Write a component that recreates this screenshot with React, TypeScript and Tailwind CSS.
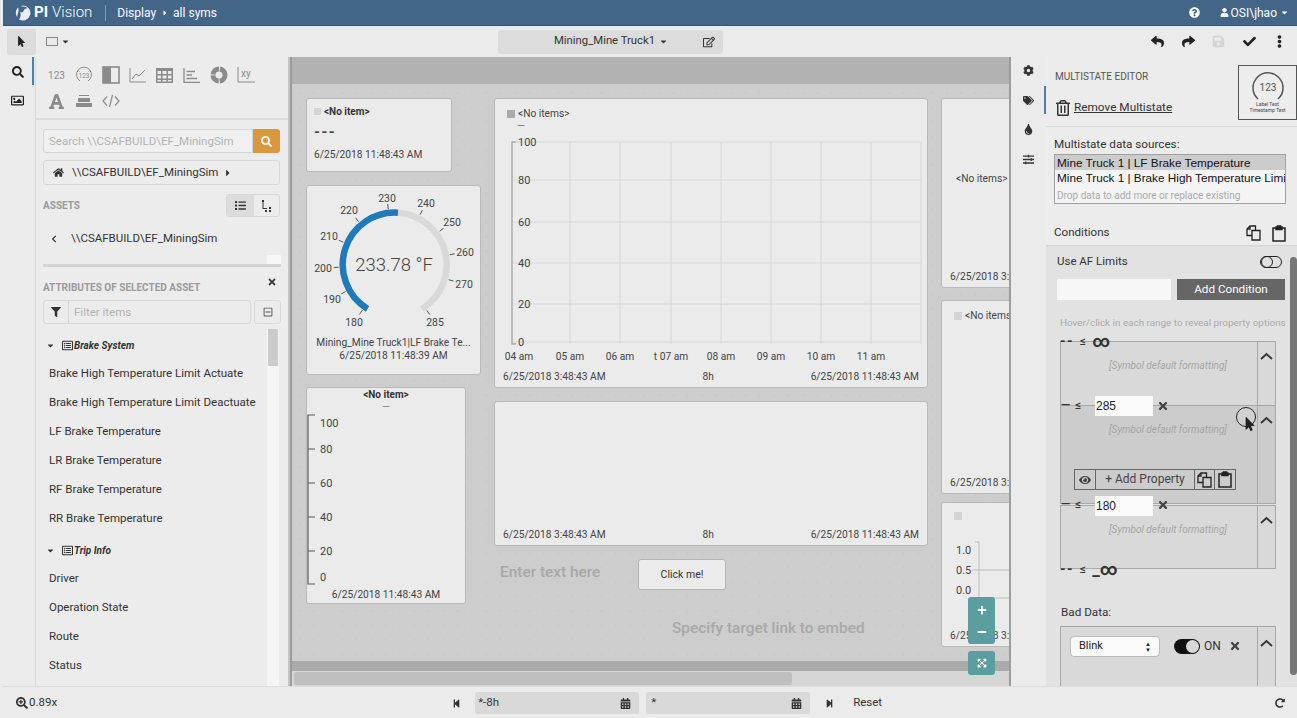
import React from "react";
import {
  FaCalendarAlt, FaCaretDown, FaCaretRight, FaCheck, FaChevronLeft, FaCog, FaEllipsisV, FaExpandArrowsAlt,
  FaEye, FaFilter, FaFont, FaHome, FaList, FaMinus, FaMousePointer, FaPlus, FaQuestionCircle, FaRedoAlt,
  FaRegEdit, FaRegImage, FaRegListAlt, FaRegMinusSquare, FaRegTrashAlt, FaReply, FaSave, FaSearch,
  FaSearchPlus, FaShare, FaSlidersH, FaStepBackward, FaStepForward, FaTags, FaTimes, FaTint, FaUser,
} from "react-icons/fa";

const assetGroups = [
  {
    name: "Brake System",
    items: [
      "Brake High Temperature Limit Actuate",
      "Brake High Temperature Limit Deactuate",
      "LF Brake Temperature",
      "LR Brake Temperature",
      "RF Brake Temperature",
      "RR Brake Temperature",
    ],
  },
  { name: "Trip Info", items: ["Driver", "Operation State", "Route", "Status"] },
];

const gaugeLabels = [
  ["180", 47, 136], ["190", 25, 113], ["200", 16, 82], ["210", 22, 50], ["220", 42, 24], ["230", 80, 12],
  ["240", 119, 17], ["250", 145, 36], ["260", 158, 66], ["270", 157, 98], ["285", 128, 136],
] as const;

const CopyIcon = () => (
  <svg width="15" height="16" viewBox="0 0 15 16" fill="none" stroke="#222" strokeWidth="1.300">
    <path d="M6 10.500H1V4L4 1H9.500V5" />
    <path d="M4 1V4H1" />
    <path d="M6 5.500H14V15H6Z" />
  </svg>
);

const ClipIcon = () => (
  <svg width="14" height="17" viewBox="0 0 14 17" fill="none" stroke="#222" strokeWidth="1.500">
    <path d="M4 3H1V16H13V3H10" />
    <path d="M4 4.500V2H5.500V1H8.500V2H10V4.500Z" fill="#222" />
  </svg>
);

const PaletteIcons = () => (
  <div className="flex flex-wrap w-[240px] pl-[7px] pt-[5px] text-[#8b8b8b]">
    <div className="w-[27px] h-[26px] flex items-center justify-center text-[10px]">123</div>
    <div className="w-[27px] h-[26px] flex items-center justify-center">
      <svg width="18" height="18" viewBox="0 0 18 18" fill="none" stroke="currentColor">
        <path d="M5 15A7.5 7.5 0 1 1 13 15" />
        <text x="9" y="11.5" fontSize="6.5" textAnchor="middle" fill="currentColor" stroke="none">123</text>
      </svg>
    </div>
    <div className="w-[27px] h-[26px] flex items-center justify-center">
      <svg width="18" height="18" viewBox="0 0 18 18">
        <rect x="1" y="1" width="16" height="16" fill="none" stroke="currentColor" strokeWidth="1.6" />
        <rect x="1" y="1" width="8" height="16" fill="currentColor" />
      </svg>
    </div>
    <div className="w-[27px] h-[26px] flex items-center justify-center">
      <svg width="18" height="16" viewBox="0 0 18 16" fill="none" stroke="currentColor">
        <path d="M1 1V15H17" />
        <path d="M3 12L7 7L10 9L16 3" />
      </svg>
    </div>
    <div className="w-[27px] h-[26px] flex items-center justify-center">
      <svg width="17" height="15" viewBox="0 0 17 15">
        <path fillRule="evenodd" fill="currentColor" d="M0 0H17V15H0ZM1.5 3V6H5V3ZM6.5 3V6H10.500V3ZM12 3V6H15.500V3ZM1.500 7.500V10.500H5V7.500ZM6.500 7.500V10.500H10.500V7.500ZM12 7.500V10.500H15.500V7.500ZM1.500 12V13.500H5V12ZM6.500 12V13.500H10.500V12ZM12 12V13.500H15.500V12Z" />
      </svg>
    </div>
    <div className="w-[27px] h-[26px] flex items-center justify-center">
      <svg width="17" height="15" viewBox="0 0 17 15" fill="none" stroke="currentColor" strokeWidth="1.300">
        <path d="M1 0V14.500H17M3.500 3.500H12M3.500 7H9M3.500 10.500H14" />
      </svg>
    </div>
    <div className="w-[27px] h-[26px] flex items-center justify-center">
      <svg width="18" height="18" viewBox="0 0 18 18" fill="none" stroke="currentColor" strokeWidth="5">
        <circle cx="9" cy="9" r="6" strokeDasharray="8.500 1" />
      </svg>
    </div>
    <div className="w-[27px] h-[26px] flex items-center justify-center">
      <svg width="18" height="16" viewBox="0 0 18 16" fill="none" stroke="currentColor">
        <path d="M1 0V15H18" />
        <text x="4" y="10" fontSize="10" fill="currentColor" stroke="none">xy</text>
      </svg>
    </div>
    <div className="w-[27px] h-[26px] flex items-center justify-center">
      <FaFont size={17} />
    </div>
    <div className="w-[27px] h-[26px] flex items-center justify-center">
      <svg width="16" height="13" viewBox="0 0 16 13" fill="currentColor">
        <path d="M3 0H13V1H3ZM2 3H14V7H2ZM0 8H16V12H0Z" />
      </svg>
    </div>
    <div className="w-[27px] h-[26px] flex items-center justify-center">
      <svg width="18" height="14" viewBox="0 0 18 14" fill="none" stroke="currentColor" strokeWidth="1.200">
        <path d="M5 2.500L1 7L5 11.500M13 2.500L17 7L13 11.500M10.500 1L7.500 13" />
      </svg>
    </div>
  </div>
);

const LeftPanel = () => (
  <aside className="w-[252px] bg-[#ececec] flex flex-col overflow-hidden">
    <div className="h-[63px] border-b-2 border-[#dcdcdc] shrink-0">
      <PaletteIcons />
    </div>
    <div className="pl-[7px] pr-[8px] pt-[9px] flex flex-col">
      <div className="flex h-[24px]">
        <div className="flex-1 bg-[#f0f0f0] border border-[#d4d4d4] rounded-l-[3px] pl-[5px] text-[11.5px] leading-[22px] text-[#b3b3b3]">
          Search \\CSAFBUILD\EF_MiningSim
        </div>
        <div className="w-[27px] bg-[#d9983f] rounded-r-[3px] flex items-center justify-center text-white text-[11px]">
          <FaSearch />
        </div>
      </div>
      <div className="mt-[7px] h-[25px] border border-[#d8d8d8] rounded-[3px] flex items-center pl-[9px] text-[11.5px] text-[#333]">
        <FaHome size={11} />
        <span className="ml-[8px]">\\CSAFBUILD\EF_MiningSim</span>
        <FaCaretRight size={10} className="ml-[5px]" />
      </div>
      <div className="mt-[9px] h-[23px] flex items-center justify-between">
        <span className="text-[10px] font-bold text-[#9a9a9a]">ASSETS</span>
        <div className="flex h-[23px] border border-[#d8d8d8] rounded-[3px] overflow-hidden text-[#333]">
          <div className="w-[27px] bg-[#dcdcdc] flex items-center justify-center text-[11px]"><FaList /></div>
          <div className="w-[25px] flex items-center justify-center">
            <svg width="11" height="12" viewBox="0 0 11 12" fill="currentColor">
              <path d="M1 0H3V2H2.500V8H6V9H1.500V2H1ZM8 7H10V9H8ZM4 10H6V12H4ZM8 10H10V12H8Z" />
            </svg>
          </div>
        </div>
      </div>
      <div className="mt-[11px] h-[22px] flex items-center pl-[7px] text-[11.5px] text-[#333]">
        <FaChevronLeft size={8} />
        <span className="ml-[13px]">\\CSAFBUILD\EF_MiningSim</span>
      </div>
    </div>
    <div className="relative mt-[5px] mx-[7px] h-[12px] overflow-hidden border-b-[3px] border-[#d4d4d4]">
      <div className="absolute right-0 top-0 w-[14px] h-[9px] bg-[#f7f7f7]" />
    </div>
    <div className="relative pl-[7px] pr-[8px] pt-[13px] h-[40px] text-[10px] font-bold text-[#9a9a9a]">
      ATTRIBUTES OF SELECTED ASSET
      <FaTimes size={10} className="absolute right-[11px] top-[10px] text-[#333]" />
    </div>
    <div className="flex h-[24px] mx-[7px] shrink-0 -mt-[7px]">
      <div className="w-[26px] border border-[#d8d8d8] rounded-l-[3px] flex items-center justify-center text-[#333] text-[10px]"><FaFilter /></div>
      <div className="flex-1 border border-l-0 border-[#d8d8d8] rounded-r-[3px] pl-[5px] text-[11.5px] leading-[22px] text-[#b3b3b3]">Filter items</div>
      <div className="w-[27px] ml-[3px] border border-[#d8d8d8] rounded-[3px] flex items-center justify-center text-[#555] text-[10px]"><FaRegMinusSquare /></div>
    </div>
    <div className="relative flex-1 overflow-hidden mt-[5px]">
      <div className="absolute right-[9px] top-0 bottom-0 w-[12px] bg-[#f5f5f5]">
        <div className="h-[37px] w-[10px] bg-[#cbcbcb] mx-auto" />
      </div>
      <div className="pl-[10px] pt-[2px] flex flex-col gap-[3px] text-[11.5px] text-[#333]">
        {assetGroups.map((group) => (
          <div key={group.name}>
            <div className="h-[28px] flex items-center font-bold italic text-[10px] text-[#333]">
              <FaCaretDown size={9} />
              <FaRegListAlt size={11} className="ml-[7px]" />
              <span className="ml-[1px]">{group.name}</span>
            </div>
            {group.items.map((item) => (
              <div key={item} className="h-[29px] leading-[29px] pl-[3px]">{item}</div>
            ))}
          </div>
        ))}
      </div>
    </div>
  </aside>
);

const TrendPlot = () => (
  <svg width="420" height="250" className="absolute left-[10px] top-[36px]" fontFamily="Roboto, sans-serif" fontSize="11" fill="#444">
    {[65, 115, 166, 216, 266, 316, 366, 416].map((x) => (
      <line key={x} x1={x} x2={x} y1="7" y2="209" stroke="#d6d6d6" />
    ))}
    {[7, 45, 87, 128, 169, 207].map((y) => (
      <line key={y} x1="7" x2="416" y1={y} y2={y} stroke="#d8d8d8" />
    ))}
    <path d="M11 7H7V209H11" fill="none" stroke="#adadad" strokeWidth="1.500" />
    <text x="13" y="11">100</text>
    <text x="13" y="49">80</text>
    <text x="13" y="91">60</text>
    <text x="13" y="132">40</text>
    <text x="13" y="173">20</text>
    <text x="13" y="211">0</text>
    {["04 am", "05 am", "06 am", "t 07 am", "08 am", "09 am", "10 am", "11 am"].map((t, i) => (
      <text key={t} x={[14, 65, 115, 166, 216, 266, 316, 366][i]} y="225" textAnchor="middle" fontSize="10.200">{t}</text>
    ))}
  </svg>
);

const Gauge = () => (
  <svg width="175" height="150" className="absolute left-0 top-0" fontFamily="Roboto, sans-serif" fontSize="10.500" fill="#444">
    <path d="M60.500 122.900A52 52 0 0 1 91 26.700" fill="none" stroke="#1f7abc" strokeWidth="6.500" />
    <path d="M91 26.700A52 52 0 0 1 114.900 122.900" fill="none" stroke="#d9d9d9" strokeWidth="6.500" />
    {gaugeLabels.map(([label, x, y]) => {
      const a = Math.atan2(y - 78.6, x - 87.7);
      return (
        <g key={label}>
          <line x1={87.7 + 56 * Math.cos(a)} y1={78.6 + 56 * Math.sin(a)} x2={87.7 + 61 * Math.cos(a)} y2={78.6 + 61 * Math.sin(a)} stroke="#555" />
          <text x={x} y={y + 4} textAnchor="middle">{label}</text>
        </g>
      );
    })}
    <text x="87" y="85" textAnchor="middle" fontSize="18.500" fontWeight="300" fill="#444">233.78 °F</text>
  </svg>
);

const Canvas = () => (
  <main className="w-[719px] relative overflow-hidden bg-[#cdcdcd] bg-[radial-gradient(#bcbcbc_0.7px,transparent_0.8px)] bg-[size:14.4px_14.4px] border-r-2 border-[#9c9c9c]">
    <div className="h-[27px] bg-[#b2b2b2]" />
    <div className="absolute left-[14px] top-[41px] w-[146px] h-[74px] bg-[#ebebeb] border border-[#b9b9b9] rounded-[3px] text-[#444] text-[10.2px]">
      <div className="flex items-center pl-[7px] pt-[5px]">
        <span className="w-[7px] h-[7px] bg-[#d4d4d4]" />
        <span className="ml-[3px] text-[10px] font-bold text-[#333]">&lt;No item&gt;</span>
      </div>
      <div className="pl-[7px] mt-[5px] text-[15px] leading-[16px] font-bold tracking-[1.5px]">---</div>
      <div className="pl-[7px] mt-[7px]">6/25/2018 11:48:43 AM</div>
    </div>
    <div className="absolute left-[14px] top-[128px] w-[175px] h-[190px] bg-[#ebebeb] border border-[#b9b9b9] rounded-[3px] text-[#444] text-[10.2px] text-center">
      <Gauge />
      <div className="absolute left-0 right-0 top-[150px] leading-[13px]">
        <div>Mining_Mine Truck1|LF Brake Te...</div>
        <div>6/25/2018 11:48:39 AM</div>
      </div>
    </div>
    <div className="absolute left-[14px] top-[330px] w-[160px] h-[217px] bg-[#ebebeb] border border-[#b9b9b9] rounded-[3px] text-[#444] text-[10.2px] text-center">
      <div className="text-[10px] font-bold text-[#333] pt-[1px] leading-[12px]">&lt;No item&gt;</div>
      <div className="leading-[12px] text-[#888]">—</div>
      <svg width="60" height="180" className="absolute left-0 top-[26px]" fontFamily="Roboto, sans-serif" fontSize="11" fill="#444">
        <path d="M8 1H1V170H8M1 35H8M1 69H8M1 103H8M1 137H8" fill="none" stroke="#555" strokeWidth="1.200" />
        <text x="13" y="13">100</text>
        <text x="13" y="39">80</text>
        <text x="13" y="73">60</text>
        <text x="13" y="107">40</text>
        <text x="13" y="141">20</text>
        <text x="13" y="167">0</text>
      </svg>
      <div className="absolute left-0 right-0 top-[199px]">6/25/2018 11:48:43 AM</div>
    </div>
    <div className="absolute left-[202px] top-[41px] w-[434px] h-[290px] bg-[#ebebeb] border border-[#b9b9b9] rounded-[3px] text-[#444] text-[10.2px]">
      <div className="flex items-center pl-[12px] pt-[7px]">
        <span className="w-[8px] h-[8px] bg-[#aaaaaa]" />
        <span className="ml-[3px]">&lt;No items&gt;</span>
      </div>
      <div className="pl-[22px] leading-[10px] text-[#777]">—</div>
      <TrendPlot />
      <div className="absolute left-[8px] right-[8px] bottom-[3px] flex justify-between">
        <span>6/25/2018 3:48:43 AM</span><span>8h</span><span>6/25/2018 11:48:43 AM</span>
      </div>
    </div>
    <div className="absolute left-[202px] top-[344px] w-[434px] h-[145px] bg-[#ebebeb] border border-[#b9b9b9] rounded-[3px] text-[#444] text-[10.2px]">
      <div className="absolute left-[8px] right-[8px] bottom-[3px] flex justify-between">
        <span>6/25/2018 3:48:43 AM</span><span>8h</span><span>6/25/2018 11:48:43 AM</span>
      </div>
    </div>
    <div className="absolute left-[208px] top-[506px] text-[15.4px] leading-[18px] font-medium text-[#a8a8a8]">Enter text here</div>
    <div className="absolute left-[346px] top-[502px] w-[88px] h-[31px] bg-[#ebebeb] border border-[#b5b5b5] rounded-[3px] flex items-center justify-center text-[10.5px] text-[#333]">Click me!</div>
    <div className="absolute left-[380px] top-[562px] text-[15.4px] leading-[18px] font-medium text-[#a8a8a8]">Specify target link to embed</div>
    <div className="absolute left-[649px] top-[41px] w-[90px] h-[190px] bg-[#ebebeb] border border-[#b9b9b9] rounded-[3px] text-[#444] text-[10.2px]">
      <div className="absolute left-[14px] top-[72px] whitespace-nowrap">&lt;No items&gt;</div>
      <div className="absolute left-[8px] bottom-[3px] whitespace-nowrap">6/25/2018 3:</div>
    </div>
    <div className="absolute left-[649px] top-[243px] w-[90px] h-[194px] bg-[#ebebeb] border border-[#b9b9b9] rounded-[3px] text-[#444] text-[10.2px]">
      <div className="absolute left-[12px] top-[7px] flex items-center whitespace-nowrap">
        <span className="w-[8px] h-[8px] bg-[#d4d4d4]" /><span className="ml-[3px]">&lt;No items</span>
      </div>
      <div className="absolute left-[8px] bottom-[3px] whitespace-nowrap">6/25/2018 3:</div>
    </div>
    <div className="absolute left-[649px] top-[445px] w-[90px] h-[145px] bg-[#ebebeb] border border-[#b9b9b9] rounded-[3px] text-[#444] text-[10.2px]">
      <span className="absolute left-[12px] top-[9px] w-[8px] h-[8px] bg-[#d4d4d4]" />
      <svg width="70" height="70" className="absolute left-0 top-[38px]" fontFamily="Roboto, sans-serif" fontSize="11" fill="#444">
        <path d="M33 1H37V57H70M30 29H70" fill="none" stroke="#bdbdbd" />
        <text x="14" y="13">1.0</text>
        <text x="14" y="33">0.5</text>
        <text x="14" y="53">0.0</text>
      </svg>
      <div className="absolute left-[8px] bottom-[3px] whitespace-nowrap">6/25/2018 3:</div>
    </div>
    <div className="absolute left-0 right-0 top-[604px] h-[10px] bg-[#aaaaaa]" />
    <div className="absolute left-0 right-0 top-[614px] bottom-0 bg-[#d6d6d6] pl-[2px] pt-[1px]">
      <div className="h-[13px] w-[498px] bg-[#bfbfbf] rounded-[2px]" />
    </div>
    <div className="absolute left-[676px] top-[540px] w-[27px] h-[47px] bg-[#5a9ea0] rounded-[3px] flex flex-col items-center justify-center gap-[12px] text-white text-[10px]">
      <FaPlus /><FaMinus />
    </div>
    <div className="absolute left-[676px] top-[594px] w-[27px] h-[24px] bg-[#5a9ea0] rounded-[3px] flex items-center justify-center text-white text-[10px]">
      <FaExpandArrowsAlt />
    </div>
  </main>
);

const Chevron = () => (
  <svg width="13" height="8" viewBox="0 0 13 8" fill="none" stroke="#333" strokeWidth="1.800">
    <path d="M1 7L6.500 2L12 7" />
  </svg>
);

const ThresholdInput = ({ value }: { value: string }) => (
  <div className="absolute left-[34px] -top-[10px] w-[58px] h-[20px] bg-[#fafafa] text-[12px] leading-[20px] pl-[1px] font-['Liberation_Sans',sans-serif] text-[#222]">{value}</div>
);

const RangeRow = ({ height, shade, children }: { height: string; shade: string; children?: React.ReactNode }) => (
  <div className={`relative flex border border-[#a8a8a8] ${height} ${shade}`}>
    <div className="flex-1 pl-[18px] pt-[16px] text-center text-[10px] italic text-[#a5a5a5]">[Symbol default formatting]</div>
    <div className="w-[18px] border-l border-[#a8a8a8] flex justify-center pt-[10px]"><Chevron /></div>
    {children}
  </div>
);

const RangeEditor = () => (
  <div className="relative mt-[12px] ml-[14px] w-[216px] text-[#444]">
    <RangeRow height="h-[65px]" shade="bg-[#d9d9d9]">
      <div className="absolute -left-px -top-[9px] flex items-center gap-[6px] text-[12px] leading-[16px] text-[#333]">
        <span className="font-bold tracking-[1.5px] text-[14px]">--</span><span>≤</span><span className="text-[17px] leading-[14px] font-bold">∞</span>
      </div>
    </RangeRow>
    <RangeRow height="h-[99px] -mt-px" shade="bg-[#cccccc]">
      <div className="absolute left-0 -top-[9px] flex items-center gap-[5px] text-[12px] leading-[16px] text-[#333]"><span className="font-bold">—</span><span>≤</span></div>
      <ThresholdInput value="285" />
      <FaTimes size={12} className="absolute left-[96px] -top-[6px] text-[#444]" />
      <div className="absolute left-[13px] top-[63px] w-[162px] h-[21px] flex border border-[#666] text-[12px] leading-[19px] text-[#444]">
        <div className="w-[21px] border-r border-[#666] flex items-center justify-center text-[#444] text-[12px]"><FaEye /></div>
        <div className="flex-1 text-center">+ Add Property</div>
        <div className="w-[20px] border-l border-[#666] flex items-center justify-center"><CopyIcon /></div>
        <div className="w-[21px] border-l border-[#666] flex items-center justify-center"><ClipIcon /></div>
      </div>
    </RangeRow>
    <RangeRow height="h-[64px] mt-[1px]" shade="bg-[#d9d9d9]">
      <div className="absolute left-0 -top-[10px] flex items-center gap-[5px] text-[12px] leading-[16px] text-[#333]"><span className="font-bold">—</span><span>≤</span></div>
      <ThresholdInput value="180" />
      <FaTimes size={12} className="absolute left-[96px] -top-[7px] text-[#444]" />
      <div className="absolute -left-px -bottom-[9px] flex items-center gap-[6px] text-[12px] leading-[16px] text-[#333]">
        <span className="font-bold tracking-[1.5px] text-[14px]">--</span><span>≤</span><span className="font-bold text-[17px] leading-[14px]">_∞</span>
      </div>
    </RangeRow>
    <div className="absolute left-[176px] top-[66px] w-[20px] h-[20px] rounded-full bg-white/10 border-[1.5px] border-[#222]" />
    <FaMousePointer size={14} className="absolute left-[183px] top-[76px] text-[#222]" />
  </div>
);

const RightPanel = () => (
  <aside className="flex-1 min-w-0 relative bg-[#ececec] flex flex-col text-[#333] overflow-hidden">
    <div className="h-[70px] border-b border-[#d8d8d8] flex justify-between pl-[9px] shrink-0">
      <div>
        <div className="mt-[14px] text-[10px] leading-[12px] text-[#555]">MULTISTATE EDITOR</div>
        <div className="mt-[16px] flex items-center text-[11.8px]">
          <FaRegTrashAlt size={16} />
          <span className="ml-[3px] underline">Remove Multistate</span>
        </div>
      </div>
      <div className="mt-[8px] w-[59px] h-[55px] bg-[#ededed] border border-[#555] flex flex-col items-center">
        <svg width="38" height="30" viewBox="0 0 38 30" fill="none" stroke="#555" strokeWidth="1.500" className="mt-[5px]">
          <path d="M9 28A15 15 0 1 1 29 28" />
          <text x="19" y="20" textAnchor="middle" fontSize="10" fill="#555" stroke="none" fontFamily="Roboto, sans-serif">123</text>
        </svg>
        <div className="text-[5px] leading-[6px] text-center text-[#444]">Label Text<br />Timestamp Text</div>
      </div>
    </div>
    <div className="px-[8px] pt-[10px] shrink-0">
      <div className="text-[11.7px] leading-[14px]">Multistate data sources:</div>
      <div className="mt-[3px] w-[232px] h-[50px] bg-[#f4f4f4] border border-[#a0a0a0] overflow-hidden text-[11.75px] leading-[15px] whitespace-nowrap font-['Liberation_Sans',sans-serif] text-[#111]">
        <div className="bg-[#cccccc] pl-[2px]">Mine Truck 1 | LF Brake Temperature</div>
        <div className="pl-[2px]">Mine Truck 1 | Brake High Temperature Limit</div>
        <div className="pl-[2px] pt-[3px] text-[10px] font-[Roboto] text-[#aaaaaa]">Drop data to add more or replace existing</div>
      </div>
      <div className="mt-[17px] h-[24px] w-[232px] flex items-center justify-between">
        <span className="text-[11.6px]">Conditions</span>
        <span className="flex gap-[11px] items-center"><CopyIcon /><ClipIcon /></span>
      </div>
    </div>
    <div className="flex-1 bg-[#e2e2e2] border-t border-[#d2d2d2] overflow-hidden">
      <div className="mt-[8px] mx-[11px] w-[225px] h-[16px] flex items-center justify-between text-[11.5px]">
        <span>Use AF Limits</span>
        <span className="relative w-[22px] h-[12px] rounded-full border border-[#222]">
          <span className="absolute left-0 -top-px w-[12px] h-[12px] rounded-full border border-[#222]" />
        </span>
      </div>
      <div className="mt-[9px] ml-[11px] flex gap-[6px]">
        <div className="w-[114px] h-[21px] bg-[#f7f7f7]" />
        <div className="w-[108px] h-[21px] bg-[#666666] text-white text-[11.7px] leading-[21px] text-center">Add Condition</div>
      </div>
      <div className="mt-[17px] ml-[14px] text-[9.9px] leading-[12px] text-[#aaaaaa] whitespace-nowrap">Hover/click in each range to reveal property options</div>
      <RangeEditor />
      <div className="mt-[36px] ml-[15px] text-[11.7px] leading-[14px]">Bad Data:</div>
      <div className="mt-[7px] ml-[14px] w-[216px] h-[70px] bg-[#d9d9d9] border border-[#a8a8a8] flex">
        <div className="flex-1 flex items-start pl-[9px] pt-[9px]">
          <div className="w-[90px] h-[21px] bg-[#fafafa] border border-[#bbbbbb] rounded-[4px] flex items-center justify-between px-[8px] text-[11px] text-[#222]">
            Blink
            <span className="text-[6px] leading-[6px]">▲<br />▼</span>
          </div>
          <span className="relative ml-[14px] mt-[3px] w-[26px] h-[15px] rounded-full bg-[#111]">
            <span className="absolute right-[1px] top-[1px] w-[13px] h-[13px] rounded-full bg-[#d9d9d9]" />
          </span>
          <span className="ml-[4px] mt-[1px] text-[12px]">ON</span>
          <FaTimes size={12} className="ml-[8px] mt-[4px] text-[#444]" />
        </div>
        <div className="w-[18px] border-l border-[#a8a8a8] flex justify-center pt-[12px]"><Chevron /></div>
      </div>
    </div>
    <div className="absolute right-0 top-[200px] bottom-[11px] w-[7px] bg-[#777777] rounded-[4px]" />
  </aside>
);

export default function App() {
  return (
    <div className="w-[1297px] h-[718px] overflow-hidden flex flex-col bg-[#ebebeb] font-[Roboto] text-[#333]">
      <header className="h-[26px] ml-[3px] shrink-0 bg-[#426588] border-b border-[#375673] flex items-center text-white">
        <svg width="16" height="16" viewBox="0 0 16 16" className="ml-[12px]" fill="#e8edf2">
          <path d="M8 0.500A7.500 7.500 0 1 1 4 14.400C6 12 6 9 5 6.500C6.500 8 8 7.500 8.500 6C9.500 4 11 3 13 3.500C11.500 2 9.500 1.500 6 1.500C6.500 1 7 0.500 8 0.500ZM3 2.500C3.800 4 3.800 6 3 8C2.500 10 2 11 2.400 12.500C0 9 0.500 5 3 2.500Z" />
        </svg>
        <span className="ml-[3px] text-[15px] font-bold leading-none">PI</span>
        <span className="ml-[4px] text-[15px] font-light leading-none">Vision</span>
        <span className="ml-[13px] h-[16px] border-l border-[#7d99b5]" />
        <span className="ml-[11px] text-[12px]">Display</span>
        <FaCaretRight size={8} className="ml-[5px]" />
        <span className="ml-[4px] text-[12px]">all syms</span>
        <FaQuestionCircle size={11} className="ml-auto" />
        <FaUser size={9} className="ml-[20px]" />
        <span className="ml-[2px] text-[12px]">OSI\jhao</span>
        <FaCaretDown size={9} className="ml-[3px] mr-[8px]" />
      </header>
      <div className="h-[29px] shrink-0 mt-[1px] ml-[3px] flex items-center relative text-[#333]">
        <div className="ml-[4px] w-[29px] h-[26px] bg-[#dcdcdc] rounded-[2px] flex items-center justify-center text-[11px] text-[#222]"><FaMousePointer /></div>
        <span className="ml-[10px] w-[12px] h-[9px] border border-[#888]" />
        <FaCaretDown size={9} className="ml-[3px]" />
        <div className="ml-[428px] w-[225px] h-[24px] bg-[#dcdcdc] rounded-[3px] flex items-center text-[11.3px] relative">
          <span className="ml-[56px]">Mining_Mine Truck1</span>
          <FaCaretDown size={9} className="ml-[4px]" />
          <FaRegEdit size={12} className="absolute right-[8px] top-[6px]" />
        </div>
        <div className="ml-auto mr-[2px] flex items-center text-[13px] text-[#222]">
          <span className="w-[30.5px] flex justify-center"><FaReply /></span>
          <span className="w-[30.5px] flex justify-center"><FaShare /></span>
          <span className="w-[30.5px] flex justify-center"><FaSave className="text-[#d4d4d4]" /></span>
          <span className="w-[30.5px] flex justify-center"><FaCheck /></span>
          <span className="w-[30.5px] flex justify-center"><FaEllipsisV /></span>
        </div>
      </div>
      <div className="flex-1 min-h-0 flex mt-[1px] border-b border-[#dddddd] ml-[3px]">
        <nav className="w-[29px] shrink-0 flex flex-col items-center pt-[9px] gap-[16px] text-[#222] text-[12px]">
          <FaSearch />
          <FaRegImage size={13} />
        </nav>
        <div className="w-[4px] shrink-0 border-r border-[#d8d8d8]">
          <div className="w-[2px] h-[28px] bg-[#4a80b5]" />
        </div>
        <LeftPanel />
        <div className="w-[4px] shrink-0 bg-[#c4c4c4] border-r-2 border-[#9c9c9c]" />
        <Canvas />
        <nav className="w-[35px] shrink-0 flex flex-col items-center pt-[8px] gap-[18.5px] text-[#333] text-[11px] relative">
          <FaCog /><FaTags /><FaTint /><FaSlidersH />
          <div className="absolute right-0 top-[29px] w-[2px] h-[28px] bg-[#4a80b5]" />
        </nav>
        <RightPanel />
      </div>
      <footer className="h-[31px] pt-[1px] shrink-0 flex items-center text-[11.5px] text-[#333] ml-[3px]">
        <FaSearchPlus size={12} className="ml-[13px]" />
        <span className="ml-[1px]">0.89x</span>
        <FaStepBackward size={9} className="ml-[395px]" />
        <div className="ml-[14px] w-[164px] h-[22px] bg-[#d9d9d9] rounded-[3px] flex items-center justify-between pl-[3px] pr-[8px]">*-8h<FaCalendarAlt size={11} /></div>
        <div className="ml-[7px] w-[164px] h-[22px] bg-[#d9d9d9] rounded-[3px] flex items-center justify-between pl-[5px] pr-[8px]">*<FaCalendarAlt size={11} /></div>
        <FaStepForward size={9} className="ml-[15px]" />
        <span className="ml-[19px]">Reset</span>
        <FaRedoAlt size={10} className="ml-auto mr-[12px]" />
      </footer>
    </div>
  );
}
